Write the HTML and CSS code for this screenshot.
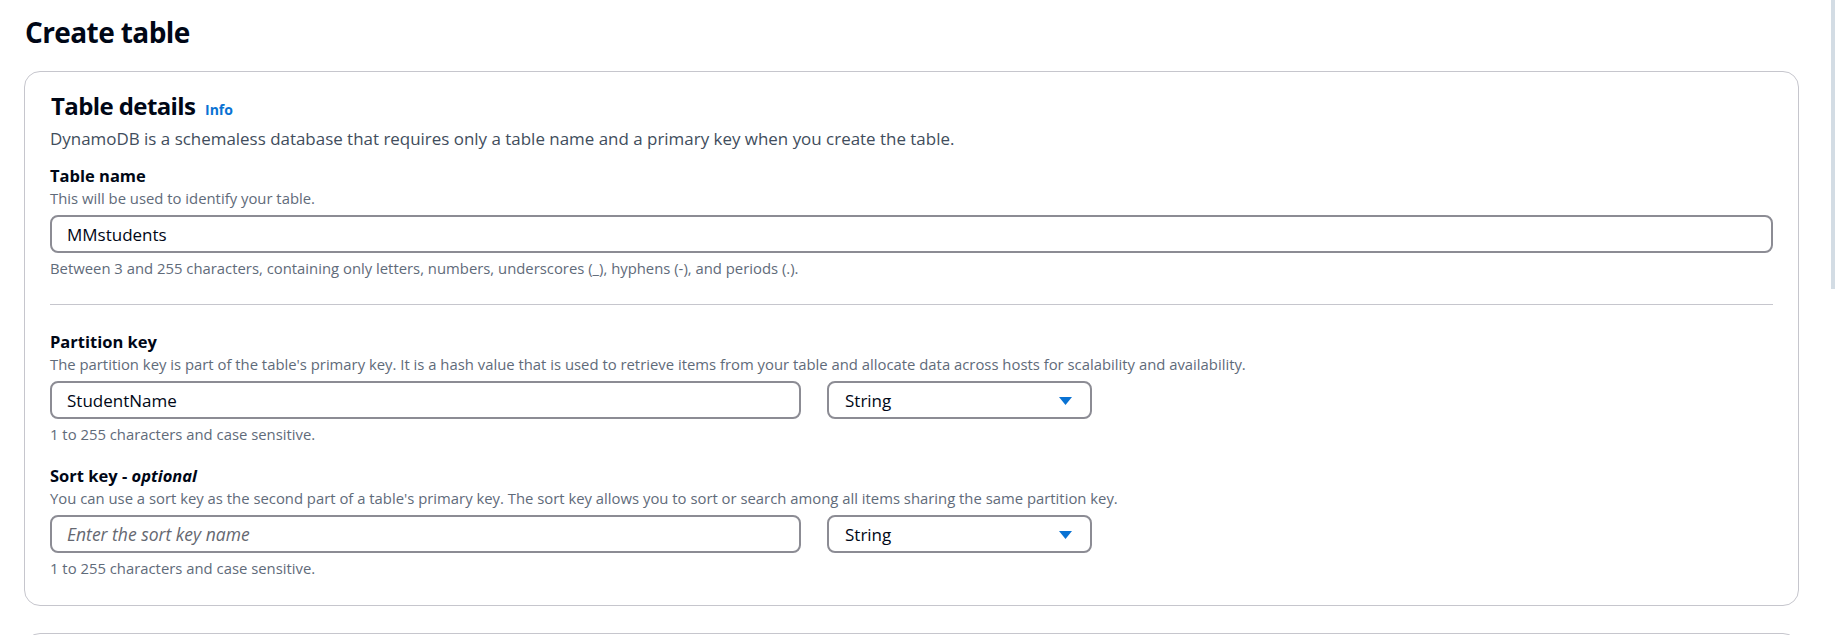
FILE: index.html
```html
<!DOCTYPE html>
<html lang="en">
<head>
<meta charset="utf-8">
<title>Create table</title>
<link rel="stylesheet" href="styles.css">
</head>
<body>
<div class="page">
  <h1 class="page-title">Create table</h1>
  <section class="card">
    <header class="card-header">
      <h2 class="card-title">Table details <a class="info" href="#">Info</a></h2>
      <p class="card-desc">DynamoDB is a schemaless database that requires only a table name and a primary key when you create the table.</p>
    </header>

    <div class="field field-first">
      <div class="label">Table name</div>
      <div class="field-desc">This will be used to identify your table.</div>
      <div class="input wide"><span class="value">MMstudents</span></div>
      <div class="constraint">Between 3 and 255 characters, containing only letters, numbers, underscores (_), hyphens (-), and periods (.).</div>
    </div>

    <hr class="divider">

    <div class="field">
      <div class="label">Partition key</div>
      <div class="field-desc">The partition key is part of the table's primary key. It is a hash value that is used to retrieve items from your table and allocate data across hosts for scalability and availability.</div>
      <div class="row">
        <div class="input key"><span class="value">StudentName</span></div>
        <div class="select"><span class="value">String</span><svg class="caret" width="13" height="8" viewBox="0 0 13 8"><polygon points="0,0 13,0 6.5,8" fill="#0972d3"/></svg></div>
      </div>
      <div class="constraint">1 to 255 characters and case sensitive.</div>
    </div>

    <div class="field field-sort">
      <div class="label">Sort key - <i>optional</i></div>
      <div class="field-desc">You can use a sort key as the second part of a table's primary key. The sort key allows you to sort or search among all items sharing the same partition key.</div>
      <div class="row">
        <div class="input key"><span class="placeholder">Enter the sort key name</span></div>
        <div class="select"><span class="value">String</span><svg class="caret" width="13" height="8" viewBox="0 0 13 8"><polygon points="0,0 13,0 6.5,8" fill="#0972d3"/></svg></div>
      </div>
      <div class="constraint">1 to 255 characters and case sensitive.</div>
    </div>
  </section>
  <section class="card card-next"></section>
</div>
<div class="scrollbar"></div>
</body>
</html>
```

FILE: styles.css
```css
* { box-sizing: border-box; }
html, body { margin: 0; padding: 0; background: #ffffff; }
body {
  font-family: "Open Sans", "Noto Sans", Arial, sans-serif;
  color: #000716;
  overflow: hidden;
}
.page {
  padding: 14px 36px 0 24px;
}
.page-title {
  margin: 0 0 0 1px;
  font-size: 28px;
  line-height: 36px;
  font-weight: 700;
  letter-spacing: -0.6px;
  color: #000716;
}
.card {
  margin-top: 21px;
  border: 1px solid #c6c6cd;
  border-radius: 16px;
  padding: 19px 25px 27px 25px;
  background: #fff;
}
.card-title {
  margin: 0 0 0 1px;
  font-size: 24px;
  line-height: 30px;
  font-weight: 700;
  letter-spacing: -0.6px;
}
.info {
  font-size: 14px;
  font-weight: 700;
  color: #0972d3;
  text-decoration: none;
  letter-spacing: 0;
  margin-left: 4px;
}
.card-desc {
  margin: 3px 0 0 0;
  font-size: 16.95px;
  line-height: 22px;
  color: #414d5c;
}
.field { display: flex; flex-direction: column; }
.field-first { margin-top: 15px; }
.label {
  font-size: 16.5px;
  line-height: 22px;
  font-weight: 700;
  color: #000716;
}
.label i { font-weight: 700; }
.field-desc {
  margin-top: 1px;
  font-size: 14.85px;
  line-height: 20px;
  color: #5f6b7a;
}
.constraint {
  margin-top: 5px;
  font-size: 14.85px;
  line-height: 20px;
  color: #5f6b7a;
}
.input, .select {
  margin-top: 7px;
  height: 38px;
  border: 2px solid #8c8c94;
  border-radius: 8px;
  display: flex;
  align-items: center;
  font-size: 17px;
  background: #fff;
}
.input { padding: 0 15px; }
.wide { width: 100%; }
.row { display: flex; gap: 26px; }
.key { width: 751px; }
.select {
  width: 265px;
  padding: 0 18px 0 16px;
  justify-content: space-between;
}
.value { color: #000716; }
.placeholder { color: #656871; font-style: italic; font-size: 17.5px; }
.caret { display: block; margin-top: 1px; }
.divider {
  margin: 26px 0 26px 0;
  border: 0;
  border-top: 1px solid #c6c6cd;
  height: 0;
}
.field-sort { margin-top: 21px; }
.card-next {
  margin-top: 27px;
  height: 60px;
}
.scrollbar {
  position: fixed;
  top: 0;
  right: 0;
  width: 4px;
  height: 289px;
  background: #d3dce4;
}
```
